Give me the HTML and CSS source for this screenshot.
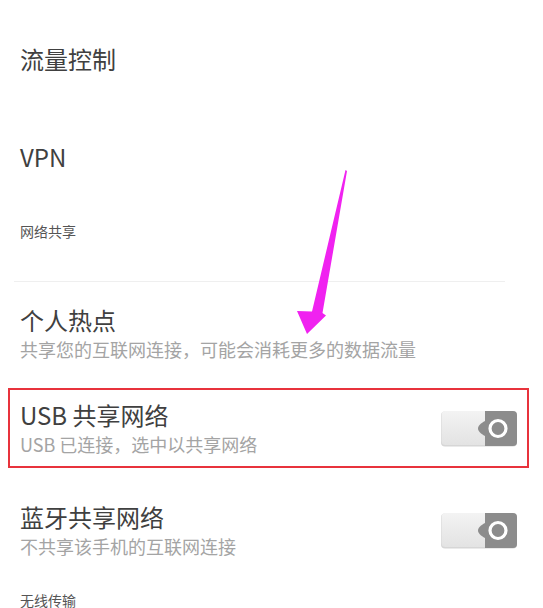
FILE: index.html
```html
<!DOCTYPE html>
<html lang="zh-CN">
<head>
<meta charset="utf-8">
<title>网络设置</title>
<link rel="stylesheet" href="styles.css">
</head>
<body>
<div class="page">
  <div class="item item-flow"><span class="title">流量控制</span></div>
  <div class="item item-vpn"><span class="title">VPN</span></div>
  <div class="section section-share"><span class="section-label">网络共享</span></div>
  <div class="divider"></div>
  <div class="item item-hotspot">
    <div class="texts">
      <div class="title">个人热点</div>
      <div class="sub">共享您的互联网连接，可能会消耗更多的数据流量</div>
    </div>
  </div>
  <div class="item item-usb">
    <div class="texts">
      <div class="title">USB 共享网络</div>
      <div class="sub">USB 已连接，选中以共享网络</div>
    </div>
    <svg class="toggle" width="76" height="36" viewBox="0 0 76 36" aria-hidden="true">
      <defs>
        <linearGradient id="lg1" x1="0" y1="0" x2="0" y2="1">
          <stop offset="0" stop-color="#f3f3f3"/>
          <stop offset="1" stop-color="#e3e3e3"/>
        </linearGradient>
      </defs>
      <rect x="0" y="0.5" width="76" height="35" rx="4" fill="#d6d6d6"/>
      <rect x="0.5" y="0" width="75" height="34" rx="4" fill="url(#lg1)"/>
      <path d="M44 0 H72 A4 4 0 0 1 76 4 V31 A4 4 0 0 1 72 35 H44 Z" fill="#8c8c8c"/>
      <path d="M44 10 C40 12 37 15 37 17.5 C37 20 40 23 44 25 Z" fill="#8c8c8c"/>
      <circle cx="57" cy="17.5" r="8" fill="#8c8c8c" stroke="#ffffff" stroke-width="3.2"/>
    </svg>
  </div>
  <div class="item item-bt">
    <div class="texts">
      <div class="title">蓝牙共享网络</div>
      <div class="sub">不共享该手机的互联网连接</div>
    </div>
    <svg class="toggle" width="76" height="36" viewBox="0 0 76 36" aria-hidden="true">
      <defs>
        <linearGradient id="lg2" x1="0" y1="0" x2="0" y2="1">
          <stop offset="0" stop-color="#f3f3f3"/>
          <stop offset="1" stop-color="#e3e3e3"/>
        </linearGradient>
      </defs>
      <rect x="0" y="0.5" width="76" height="35" rx="4" fill="#d6d6d6"/>
      <rect x="0.5" y="0" width="75" height="34" rx="4" fill="url(#lg2)"/>
      <path d="M44 0 H72 A4 4 0 0 1 76 4 V31 A4 4 0 0 1 72 35 H44 Z" fill="#8c8c8c"/>
      <path d="M44 10 C40 12 37 15 37 17.5 C37 20 40 23 44 25 Z" fill="#8c8c8c"/>
      <circle cx="57" cy="17.5" r="8" fill="#8c8c8c" stroke="#ffffff" stroke-width="3.2"/>
    </svg>
  </div>
  <div class="section section-wireless"><span class="section-label">无线传输</span></div>

  <svg class="arrow" width="543" height="608" viewBox="0 0 543 608" aria-hidden="true">
    <polygon points="345.5,170 347,171 322.5,313 326,315.5 307,334 297,311 312,311.5" fill="#f022f0"/>
  </svg>
</div>
</body>
</html>
```
FILE: styles.css
```css
html, body {
  margin: 0;
  padding: 0;
  background: #ffffff;
}
body {
  width: 543px;
  height: 608px;
  overflow: hidden;
  font-family: "Noto Sans CJK SC", "Noto Sans", sans-serif;
}
.page {
  position: relative;
  display: flex;
  flex-direction: column;
  width: 543px;
  height: 608px;
  overflow: hidden;
}
.item {
  display: flex;
  flex: none;
  align-items: center;
  padding-left: 20px;
  box-sizing: border-box;
}
.title {
  font-size: 24px;
  line-height: 30px;
  color: #404040;
}
.sub {
  font-size: 18px;
  line-height: 28px;
  color: #a4a4a4;
}
.item-flow {
  height: 118px;
}
.item-vpn {
  height: 78px;
}
.section {
  display: flex;
  flex: none;
  align-items: center;
  padding-left: 20px;
}
.section-label {
  font-size: 14px;
  line-height: 20px;
  color: #555555;
}
.section-share {
  height: 70px;
}
.divider {
  flex: none;
  height: 1px;
  background: #efefef;
  margin: 15px 38px 0 14px;
}
.item-hotspot {
  height: 106px;
  align-items: flex-start;
  padding-top: 23px;
}
.item-usb {
  height: 80px;
  margin: 0 14px 0 8px;
  border: 2px solid #e8333c;
  padding: 0 10px 0 10px;
  justify-content: space-between;
}
.item-usb .texts {
  padding-top: 2px;
}
.item-usb .toggle {
  margin-top: 2px;
}
.item-bt {
  height: 108px;
  justify-content: space-between;
  padding-right: 26px;
  padding-top: 18px;
}
.section-wireless {
  height: 20px;
  margin-top: 14px;
}
.toggle {
  display: block;
  flex: none;
}
.arrow {
  position: absolute;
  left: 0;
  top: 0;
  pointer-events: none;
}
```
